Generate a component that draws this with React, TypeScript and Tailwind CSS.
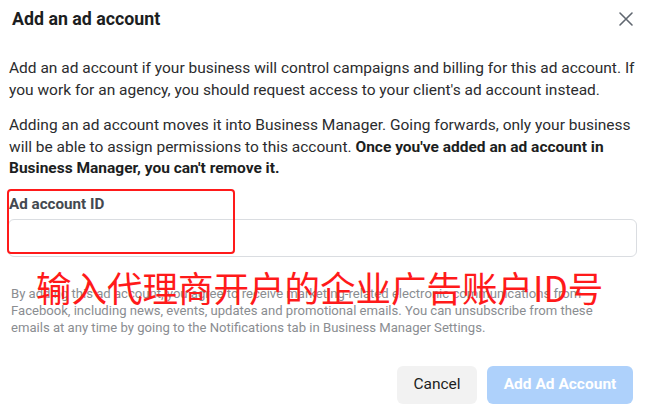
export default function App() {
  return (
    <div className="relative w-[650px] h-[411px] bg-white overflow-hidden text-[#2b2c2e]" style={{ fontFamily: 'Roboto, "Noto Sans CJK SC", sans-serif' }}>
      <div className="flex items-center justify-between h-[38px] pl-[12px] pr-[16px]">
        <h1 className="text-[17.8px] font-bold text-[#1c1e21]">Add an ad account</h1>
        <svg width="16" height="16" viewBox="0 0 16 16" className="text-[#606770]">
          <path d="M2 2L14 14M14 2L2 14" stroke="currentColor" strokeWidth="1.6" strokeLinecap="round" />
        </svg>
      </div>

      <div className="px-[9px] pt-[20px] text-[15.5px] leading-[21.5px]">
        <p>
          Add an ad account if your business will control campaigns and billing for this ad account. If
          you work for an agency, you should request access to your client's ad account instead.
        </p>
        <p className="mt-[14px]">
          Adding an ad account moves it into Business Manager. Going forwards, only your business will be able to assign permissions to this account.{' '}
          <span className="font-bold text-[#1c1e21]">Once you've added an ad account in Business Manager, you can't remove it.</span>
        </p>

        <label className="block mt-[14px] font-bold text-[15.2px] leading-[20px] text-[#444950]">Ad account ID</label>
        <div className="mt-[5px] h-[38px] w-[629px] -ml-[1px] rounded-[6px] border border-[#dadde1]" />
      </div>

      <p className="w-[612px] px-[11px] mt-[28px] text-[13.1px] leading-[17px] text-[#8a8d91]">
        By adding this ad account, you agree to receive marketing-related electronic communications from Facebook, including news, events, updates and promotional emails. You can unsubscribe from these emails at any time by going to the Notifications tab in Business Manager Settings.
      </p>

      <div className="flex justify-end gap-[10px] pr-[17px] mt-[30px]">
        <button className="h-[38px] w-[80px] rounded-[6px] bg-[#f2f2f2] text-[15.5px] text-[#1c1e21]">Cancel</button>
        <button className="h-[38px] w-[146px] rounded-[6px] bg-[#aed1fb] text-[15.5px] font-bold text-white">Add Ad Account</button>
      </div>

      <div className="absolute left-[7px] top-[189px] w-[228px] h-[65px] border-2 border-[#ff1a1a] rounded-[4px]" />
      <div className="absolute left-[36px] top-[266px] text-[35.5px] leading-[42px] text-[#ff1a1a] whitespace-nowrap" style={{ fontFamily: '"Noto Sans CJK SC", sans-serif' }}>
        输入代理商开户的企业广告账户ID号
      </div>
    </div>
  );
}
